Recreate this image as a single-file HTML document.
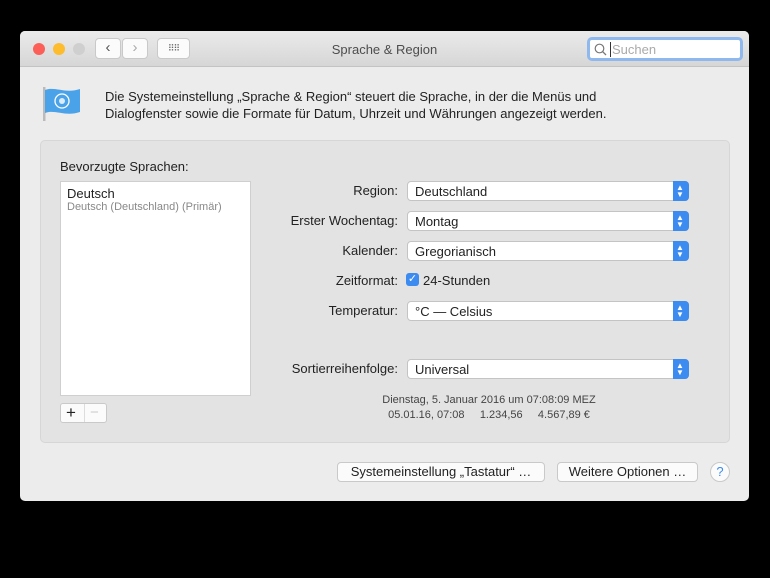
<!DOCTYPE html><html><head><style>
*{box-sizing:border-box}body{margin:0;width:770px;height:578px;background:#000;font-family:"Liberation Sans",sans-serif;font-size:13px;color:#222;position:relative;overflow:hidden}
.win{position:absolute;left:20px;top:31px;width:729px;height:470px;background:#ececec;border-radius:5px;overflow:hidden}
.tb{position:absolute;left:0;top:0;width:729px;height:36px;background:linear-gradient(#ebebeb,#d6d6d6);border-bottom:1px solid #c3c3c3}
.dot{position:absolute;top:12px;width:12px;height:12px;border-radius:50%}
.btn{position:absolute;background:#fbfbfb;border:1px solid #c9c9c9;border-radius:4px}
.a{position:absolute}
.pop{position:absolute;left:366px;width:282px;height:20px;background:#fff;border:1px solid #c4c4c4;border-radius:4px;padding:2px 0 0 7px;font-size:13px}
.pop:after{content:"";position:absolute;right:-1px;top:-1px;width:16px;height:20px;background:#3b8bf0;border-radius:0 4px 4px 0}
.pop i{position:absolute;right:4px;top:2px;z-index:2;color:#fff;font-style:normal;font-size:8px;line-height:7px;width:8px;text-align:center}
.lbl{position:absolute;width:357px;left:0;text-align:right;font-size:13px}
</style></head><body>
<div class="win">
<div class="tb">
<div class="dot" style="left:13px;background:#fc5f57"></div>
<div class="dot" style="left:33px;background:#fdbc2e"></div>
<div class="dot" style="left:53px;background:#cfcfcf"></div>
<div class="btn" style="left:75px;top:7px;width:26px;height:21px;text-align:center;color:#555;font-size:15px;line-height:18px">&#8249;</div>
<div class="btn" style="left:102px;top:7px;width:26px;height:21px;text-align:center;color:#aaa;font-size:15px;line-height:18px">&#8250;</div>
<div class="btn" style="left:137px;top:7px;width:33px;height:21px;text-align:center;color:#666;font-size:9px;line-height:18px;letter-spacing:-1px">⠿⠿</div>
<div class="a" style="left:0;width:729px;top:11px;text-align:center;color:#4d4d4d;font-size:13px">Sprache &amp; Region</div>
<div class="a" style="left:567px;top:6px;width:156px;height:24px;background:#fff;border:3px solid #8fb8ef;border-radius:5px;color:#aaa;padding:2px 0 0 20px">
<svg style="position:absolute;left:4px;top:3px" width="13" height="13"><circle cx="5.5" cy="5.5" r="4.3" fill="none" stroke="#777" stroke-width="1.2"/><line x1="8.6" y1="8.6" x2="12" y2="12" stroke="#777" stroke-width="1.3"/></svg><span style="border-left:1px solid #333;padding-left:1px">Suchen</span></div>
</div>
<svg class="a" style="left:20px;top:53px" width="44" height="40"><rect x="3" y="3" width="2.5" height="34" fill="#bbb"/><path d="M5 6 C15 2 25 10 40 5 L40 28 C25 33 15 25 5 29Z" fill="#4aa2e8"/><circle cx="22" cy="17" r="7" fill="none" stroke="#fff" stroke-width="1.3"/><circle cx="22" cy="17" r="3" fill="#fff" opacity=".8"/></svg>
<div class="a" style="left:85px;top:57px;line-height:17px;font-size:13px">Die Systemeinstellung „Sprache &amp; Region“ steuert die Sprache, in der die Menüs und<br>Dialogfenster sowie die Formate für Datum, Uhrzeit und Währungen angezeigt werden.</div>
<div class="a" style="left:20px;top:109px;width:690px;height:303px;background:#e3e3e3;border:1px solid #d6d6d6;border-radius:5px">
<div class="a" style="left:19px;top:18px">Bevorzugte Sprachen:</div>
<div class="a" style="left:19px;top:40px;width:191px;height:215px;background:#fff;border:1px solid #cfcfcf;padding:4px 6px"><div>Deutsch</div><div style="color:#888;font-size:11px">Deutsch (Deutschland) (Primär)</div></div>
<div class="btn" style="left:19px;top:262px;width:47px;height:20px;border-radius:3px"><span style="position:absolute;left:5px;top:-1px;font-size:17px">+</span><span style="position:absolute;left:23px;top:0;height:18px;border-left:1px solid #ddd"></span><span style="position:absolute;left:29px;top:0;color:#ccc;font-size:15px">−</span></div>
<div class="lbl" style="top:42px">Region:</div><div class="pop" style="top:40px">Deutschland<i>▲<br>▼</i></div>
<div class="lbl" style="top:72px">Erster Wochentag:</div><div class="pop" style="top:70px">Montag<i>▲<br>▼</i></div>
<div class="lbl" style="top:102px">Kalender:</div><div class="pop" style="top:100px">Gregorianisch<i>▲<br>▼</i></div>
<div class="lbl" style="top:132px">Zeitformat:</div>
<div class="a" style="left:365px;top:132px;width:13px;height:13px;background:#3b8bf0;border-radius:3px;color:#fff;font-size:11px;line-height:13px;text-align:center">✓</div>
<div class="a" style="left:382px;top:132px">24-Stunden</div>
<div class="lbl" style="top:162px">Temperatur:</div><div class="pop" style="top:160px">°C — Celsius<i>▲<br>▼</i></div>
<div class="lbl" style="top:220px">Sortierreihenfolge:</div><div class="pop" style="top:218px">Universal<i>▲<br>▼</i></div>
<div class="a" style="left:298px;width:300px;top:252px;text-align:center;font-size:11px;color:#444;line-height:15px">Dienstag, 5. Januar 2016 um 07:08:09 MEZ<br>05.01.16, 07:08 &nbsp;&nbsp;&nbsp; 1.234,56 &nbsp;&nbsp;&nbsp; 4.567,89 €</div>
</div>
<div class="btn" style="left:317px;top:431px;width:208px;height:20px;text-align:center;line-height:18px">Systemeinstellung „Tastatur“ …</div>
<div class="btn" style="left:537px;top:431px;width:141px;height:20px;text-align:center;line-height:18px">Weitere Optionen …</div>
<div class="btn" style="left:690px;top:431px;width:20px;height:20px;border-radius:50%;text-align:center;color:#3b8bf0;line-height:18px">?</div>
</div>
</body></html>
